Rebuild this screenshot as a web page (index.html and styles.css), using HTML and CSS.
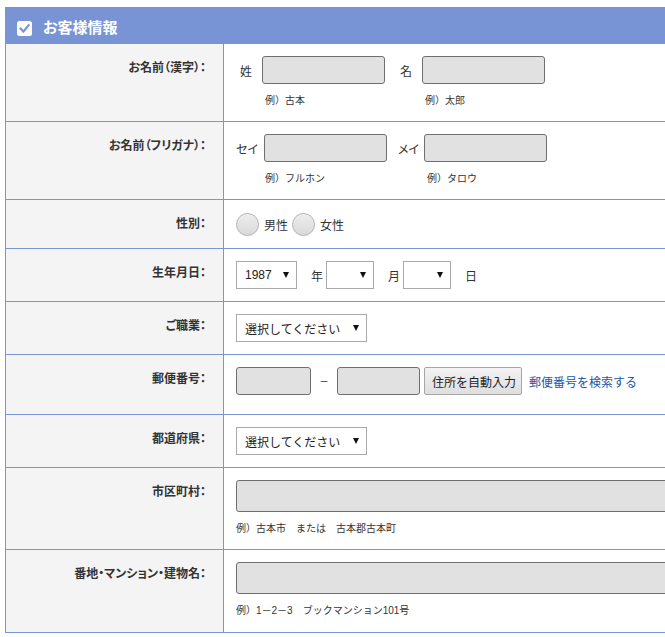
FILE: index.html
```html
<!DOCTYPE html>
<html lang="ja">
<head>
<meta charset="utf-8">
<title>お客様情報</title>
<link rel="stylesheet" href="styles.css">
</head>
<body>
<div class="form">
  <div class="form-head">
    <svg class="head-check" width="15" height="15" viewBox="0 0 15 15"><rect width="15" height="15" rx="2.5" fill="#fff"/><path d="M3.6 7.6 L6.4 10.6 L11.6 4.2" stroke="#7894d4" stroke-width="2.2" fill="none" stroke-linecap="square"/></svg>
    <h2 class="head-title">お客様情報</h2>
  </div>

  <div class="row">
    <div class="label">お名前（漢字）：</div>
    <div class="field names">
      <div class="name-group">
        <div class="name-line"><span class="nm nm-kanji">姓</span><input class="txt w123" type="text"></div>
        <div class="eg eg-name">例）古本</div>
      </div>
      <div class="name-group gap">
        <div class="name-line"><span class="nm nm-kanji">名</span><input class="txt w123" type="text"></div>
        <div class="eg eg-name">例）太郎</div>
      </div>
    </div>
  </div>

  <div class="row">
    <div class="label">お名前（フリガナ）：</div>
    <div class="field names">
      <div class="name-group">
        <div class="name-line"><span class="nm nm-kana1">セイ</span><input class="txt w123" type="text"></div>
        <div class="eg eg-name">例）フルホン</div>
      </div>
      <div class="name-group gap">
        <div class="name-line"><span class="nm nm-kana2">メイ</span><input class="txt w123" type="text"></div>
        <div class="eg eg-name">例）タロウ</div>
      </div>
    </div>
  </div>

  <div class="row">
    <div class="label">性別：</div>
    <div class="field line">
      <span class="radio"></span><span class="opt">男性</span>
      <span class="radio"></span><span class="opt">女性</span>
    </div>
  </div>

  <div class="row">
    <div class="label">生年月日：</div>
    <div class="field line">
      <span class="sel w61"><span class="sel-text">1987</span><span class="arrow"></span></span>
      <span class="unit">年</span>
      <span class="sel w48"><span class="sel-text"></span><span class="arrow"></span></span>
      <span class="unit">月</span>
      <span class="sel w48"><span class="sel-text"></span><span class="arrow"></span></span>
      <span class="unit">日</span>
    </div>
  </div>

  <div class="row">
    <div class="label">ご職業：</div>
    <div class="field line">
      <span class="sel w131"><span class="sel-text">選択してください</span><span class="arrow"></span></span>
    </div>
  </div>

  <div class="row">
    <div class="label">郵便番号：</div>
    <div class="field line zip">
      <input class="txt w75" type="text">
      <span class="dash">–</span>
      <input class="txt w83" type="text">
      <button class="btn" type="button">住所を自動入力</button>
      <a class="link" href="#">郵便番号を検索する</a>
    </div>
  </div>

  <div class="row">
    <div class="label">都道府県：</div>
    <div class="field line">
      <span class="sel w131"><span class="sel-text">選択してください</span><span class="arrow"></span></span>
    </div>
  </div>

  <div class="row">
    <div class="label">市区町村：</div>
    <div class="field wide">
      <input class="txt full" type="text">
      <div class="eg">例）古本市　または　古本郡古本町</div>
    </div>
  </div>

  <div class="row last">
    <div class="label">番地・マンション・建物名：</div>
    <div class="field wide">
      <input class="txt full" type="text">
      <div class="eg">例）1－2－3　ブックマンション101号</div>
    </div>
  </div>
</div>
</body>
</html>
```

FILE: styles.css
```css
html, body {
  margin: 0;
  padding: 0;
  overflow: hidden;
  background: #fff;
}

body {
  font-family: "Liberation Sans", "Noto Sans CJK JP", sans-serif;
  font-size: 12px;
  color: #333;
}

.form {
  margin: 7px 0 0 5px;
  width: 660px;
}

.form-head {
  box-sizing: border-box;
  height: 37px;
  padding: 5px 0 0 12px;
  background: #7894d4;
  display: flex;
  align-items: center;
}

.head-check {
  display: block;
  flex: none;
}

.head-title {
  margin: 0 0 0 11px;
  color: #fff;
  font-size: 15px;
  font-weight: bold;
  line-height: 20px;
  font-feature-settings: "palt";
}

.row {
  display: grid;
  grid-template-columns: 218px 1fr;
  border-left: 1px solid #7a95d6;
  border-bottom: 1px solid #7a95d6;
}

.label {
  box-sizing: border-box;
  background: #f4f4f4;
  border-right: 1px solid #7a95d6;
  padding: 16px 17px 0 0;
  text-align: right;
  font-weight: bold;
  font-size: 12px;
  line-height: 16px;
  color: #333;
  font-feature-settings: "palt";
}

.field {
  padding: 12px 0 12px 12px;
  min-width: 0;
}

.line {
  display: flex;
  align-items: center;
  min-height: 24px;
}

.names {
  display: flex;
  align-items: flex-start;
}

.name-group.gap {
  margin-left: 11px;
}

.name-line {
  display: flex;
  align-items: center;
}

.nm {
  box-sizing: border-box;
  flex: none;
  font-size: 12px;
  font-feature-settings: "palt";
}

.nm-kanji {
  width: 26px;
  padding-left: 4px;
}

.nm-kana1 {
  width: 28px;
}

.nm-kana2 {
  width: 26px;
}

.txt {
  box-sizing: border-box;
  display: block;
  height: 28px;
  margin: 0;
  padding: 0 6px;
  background: #e1e1e1;
  border: 1px solid #6f6f6f;
  border-radius: 3px;
  font: inherit;
  outline: none;
}

.w123 { width: 123px; }
.w75 { width: 75px; }
.w83 { width: 83px; }

.wide {
  overflow: hidden;
}

.txt.full {
  width: calc(100% + 12px);
  height: 32px;
}

.eg {
  margin-top: 8px;
  font-size: 10px;
  line-height: 17px;
  color: #333;
}

.eg-name {
  padding-left: 29px;
}

.radio {
  box-sizing: border-box;
  width: 23px;
  height: 23px;
  border-radius: 50%;
  border: 1px solid #b4b4b4;
  background: linear-gradient(#eeeeee, #d9d9d9);
  flex: none;
}

.opt {
  margin-left: 5px;
  margin-right: 4px;
}

.sel {
  box-sizing: border-box;
  height: 28px;
  display: flex;
  align-items: center;
  justify-content: space-between;
  padding: 0 7px 0 8px;
  background: #fff;
  border: 1px solid #a9a9a9;
  color: #222;
  flex: none;
}

.w61 { width: 61px; }
.w48 { width: 48px; }
.w131 { width: 131px; }

.arrow {
  width: 0;
  height: 0;
  border-left: 3px solid transparent;
  border-right: 3px solid transparent;
  border-top: 6px solid #111;
}

.unit {
  margin: 0 3px 0 15px;
}

.unit:nth-of-type(n+2) {
  margin-left: 14px;
}

.zip {
  padding-bottom: 19px;
}

.dash {
  width: 26px;
  text-align: center;
  color: #555;
}

.btn {
  box-sizing: border-box;
  width: 98px;
  height: 28px;
  margin: 0 0 0 4px;
  padding: 0 0 0 7px;
  text-align: left;
  font: inherit;
  color: #222;
  background: linear-gradient(#f3f3f3, #dedede);
  border: 1px solid #a6a6a6;
  border-radius: 2px;
}

.link {
  margin-left: 7px;
  color: #1b57a8;
  text-decoration: none;
}

.row.last .field {
  padding-bottom: 13px;
}
```
